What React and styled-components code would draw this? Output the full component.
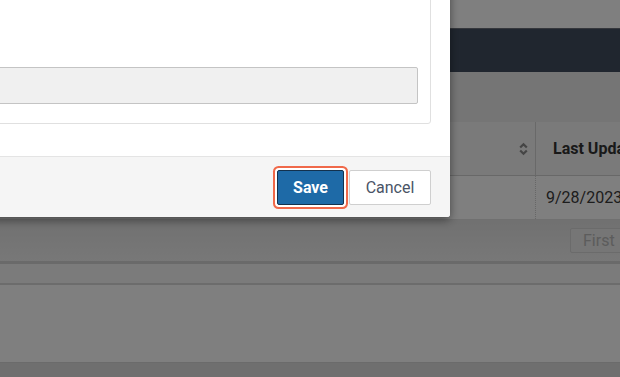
import React from 'react'
import styled, { createGlobalStyle } from 'styled-components'

const GlobalStyle = createGlobalStyle`
  html, body {
    margin: 0;
    padding: 0;
    background: #ffffff;
    font-family: Roboto, "Liberation Sans", Arial, sans-serif;
    overflow: hidden;
  }
`

const Page = styled('div')`
  width: 620px;
  height: 377px;
  display: flex;
  flex-direction: column;
  background: #ffffff;
`

const TopStrip = styled('div')`
  height: 28px;
  background: #ffffff;
`

const NavBand = styled('div')`
  height: 43px;
  background: #404c5e;
  border-top: 1px solid #6a6f78;
`

const Toolbar = styled('div')`
  height: 50px;
  background: #eaeaea;
`

const Row = styled('div')`
  display: grid;
  grid-template-columns: 536px 1fr;
  height: ${p => p.h}px;
  background: ${p => p.bg};
  border-bottom: 1px solid ${p => p.line};
`

const HeadCell = styled('div')`
  display: flex;
  align-items: center;
  justify-content: ${p => (p.end ? 'flex-end' : 'flex-start')};
  padding: 0 ${p => (p.end ? '7px' : '0')} 0 ${p => (p.end ? '0' : '17px')};
  border-right: ${p => (p.end ? '1px solid #d2d2d2' : 'none')};
  font-size: 16px;
  font-weight: 700;
  color: #333;
  white-space: nowrap;
  overflow: hidden;
`

const Cell = styled('div')`
  display: flex;
  align-items: center;
  padding-left: ${p => (p.end ? '0' : '10px')};
  border-right: ${p => (p.end ? '1px dotted #cfcfcf' : 'none')};
  font-size: 16px;
  color: #3a3a3a;
  white-space: nowrap;
  overflow: hidden;
`

const Pager = styled('div')`
  height: 44px;
  display: flex;
  align-items: center;
  justify-content: flex-end;
  background: linear-gradient(#e2e2e2, #f0f0f0);
  border-bottom: 3px solid #d4d4d4;
  box-sizing: border-box;
  overflow: hidden;
`

const PagerButton = styled('div')`
  height: 25px;
  width: 60px;
  margin-right: -10px;
  box-sizing: border-box;
  display: flex;
  align-items: center;
  padding-left: 12px;
  border: 1px solid #d6d6d6;
  border-radius: 2px;
  background: #ececec;
  color: #b8b8b8;
  font-size: 16px;
`

const Band = styled('div')`
  height: ${p => p.h}px;
  background: ${p => p.bg};
  border-bottom: ${p => p.line || 'none'};
  box-sizing: border-box;
  flex: ${p => (p.grow ? 1 : 'none')};
`

const Overlay = styled('div')`
  position: fixed;
  inset: 0;
  background: rgba(0, 0, 0, 0.5);
`

const Modal = styled('div')`
  position: fixed;
  left: -400px;
  top: -200px;
  width: 850px;
  background: #ffffff;
  border-radius: 3px;
  box-shadow: 0 3px 10px rgba(0, 0, 0, 0.45);
  display: flex;
  flex-direction: column;
`

const ModalBody = styled('div')`
  padding: 20px 19px 32px 20px;
`

const Panel = styled('div')`
  height: 304px;
  box-sizing: border-box;
  border: 1px solid #e0e0e0;
  border-radius: 3px;
  display: flex;
  flex-direction: column;
  justify-content: flex-end;
  padding: 0 12px 19px 12px;
`

const Field = styled('div')`
  height: 37px;
  box-sizing: border-box;
  background: #f0f0f0;
  border: 1px solid #c4c4c4;
  border-radius: 2px;
`

const Footer = styled('div')`
  display: flex;
  justify-content: flex-end;
  align-items: center;
  gap: 5px;
  padding: 13px 19px 12px;
  background: #f5f5f5;
  border-top: 1px solid #e4e4e4;
  border-radius: 0 0 3px 3px;
`

const Button = styled('button')`
  height: 35px;
  box-sizing: border-box;
  border-radius: 2px;
  padding: 0;
  font-family: Roboto, "Liberation Sans", Arial, sans-serif;
  font-size: 16px;
  cursor: pointer;
  border: 1px solid ${p => (p.primary ? '#13314d' : '#cfcfcf')};
  background: ${p => (p.primary ? '#1e6aa7' : '#ffffff')};
  color: ${p => (p.primary ? '#ffffff' : '#4a5466')};
  font-weight: ${p => (p.primary ? 700 : 400)};
  width: ${p => (p.primary ? '67px' : '82px')};
  box-shadow: ${p =>
    p.primary ? '0 0 0 2px #ffffff, 0 0 0 4px #f0694a' : 'none'};
`

const SortIcon = () => (
  <svg width="9" height="14" viewBox="0 0 9 14">
    <path d="M1.2 5.5 L4.5 2.2 L7.8 5.5" fill="none" stroke="#8a8a8a" strokeWidth="2.2" />
    <path d="M1.2 8.5 L4.5 11.8 L7.8 8.5" fill="none" stroke="#8a8a8a" strokeWidth="2.2" />
  </svg>
)

export default function App() {
  return (
    <>
      <GlobalStyle />
      <Page>
        <TopStrip />
        <NavBand />
        <Toolbar />
        <Row h={53} bg="#f4f4f4" line="#d0d0d0">
          <HeadCell end>
            <SortIcon />
          </HeadCell>
          <HeadCell>Last Updated</HeadCell>
        </Row>
        <Row h={43} bg="#ffffff" line="#e0e0e0">
          <Cell end />
          <Cell>9/28/2023</Cell>
        </Row>
        <Pager>
          <PagerButton>First</PagerButton>
        </Pager>
        <Band h={21} bg="#f6f6f6" line="2px solid #d8d8d8" />
        <Band h={78} bg="#fefefe" line="1px solid #d6d6d6" />
        <Band grow bg="#dedede" />
      </Page>
      <Overlay />
      <Modal>
        <ModalBody>
          <Panel>
            <Field />
          </Panel>
        </ModalBody>
        <Footer>
          <Button primary>Save</Button>
          <Button>Cancel</Button>
        </Footer>
      </Modal>
    </>
  )
}
